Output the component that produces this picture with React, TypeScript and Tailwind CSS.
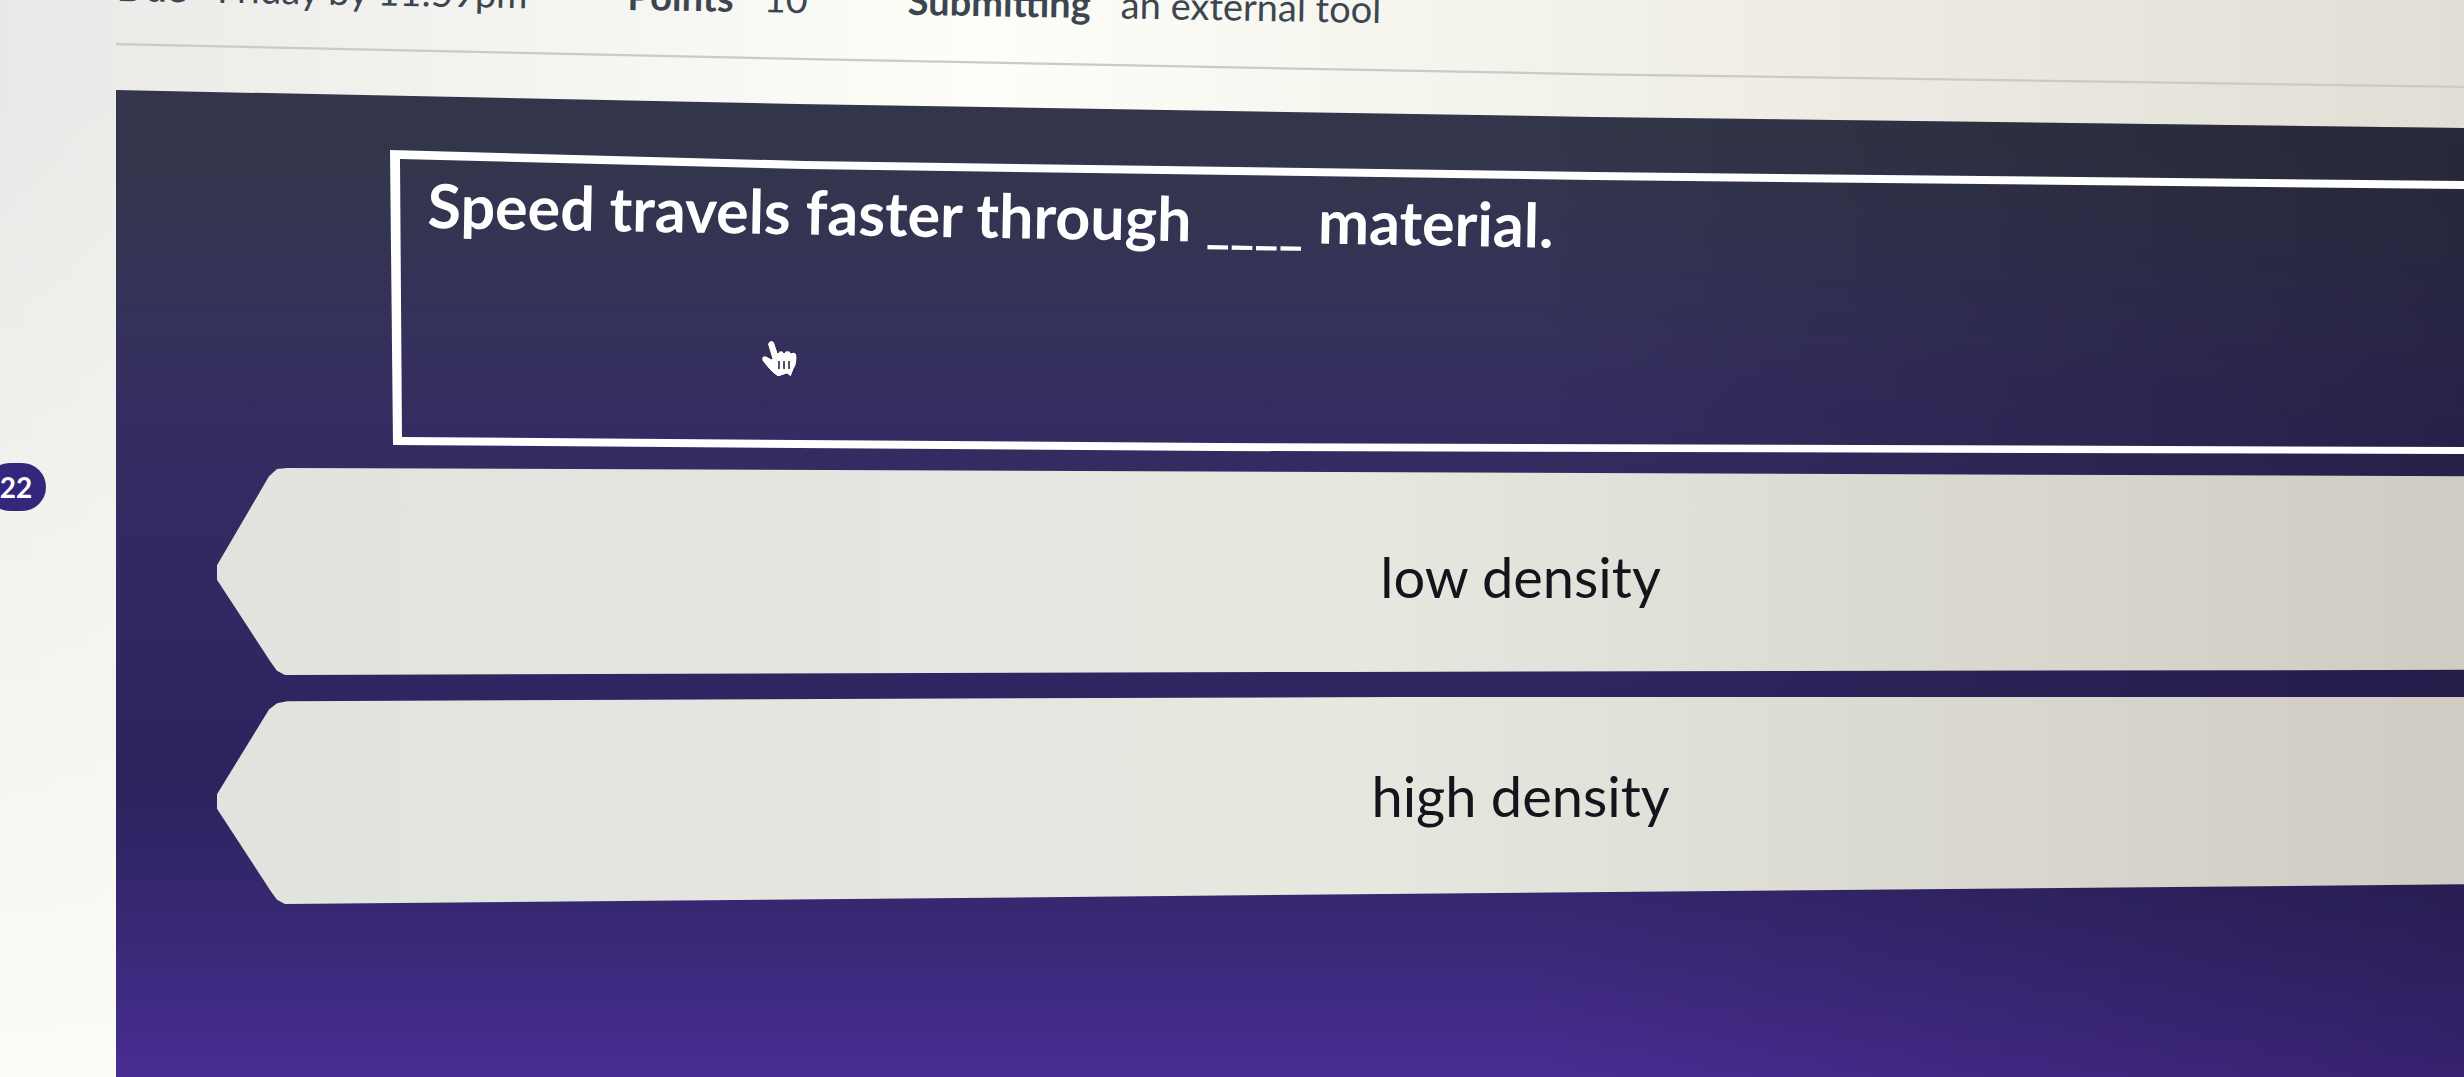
import React from 'react';

interface Detail {
  label: string;
  value: string;
}

interface Answer {
  label: string;
  shape: string;
}

const details: Detail[] = [
  { label: 'Due', value: 'Friday by 11:59pm' },
  { label: 'Points', value: '10' },
  { label: 'Submitting', value: 'an external tool' },
];

const answers: Answer[] = [
  {
    label: 'low density',
    shape: 'pt-[10px] [clip-path:polygon(0_47%,52px_4%,60px_1px,70px_0,100%_4%,100%_97.5%,50%_98.5%,68px_100%,60px_98%,54px_94%,0_54%)]',
  },
  {
    label: 'high density',
    shape: 'pb-[10px] [clip-path:polygon(0_47%,52px_6%,60px_3%,70px_2%,100%_-2%,100%_90.5%,68px_100%,60px_98%,54px_94%,0_54%)]',
  },
];

const PointerHand = () => (
  <svg viewBox="0 0 38 38" className="absolute left-[371px] top-[190px] size-[38px]" aria-hidden="true">
    <path
      d="M9 1c2-1 4 0 5 3l3 9c1-3 5-3 6 0 1-3 6-3 7 0 3-2 6 0 6 4 0 6-1 9-3 12l-3 8-4-3-9 3c-6-4-10-9-15-15-3-4 0-7 3-6l6 3L7 6C6 4 7 2 9 1z"
      fill="#fdfdfb"
      stroke="#26204e"
      strokeWidth="1"
    />
    <path d="M18 21v8M23 21v8M28 21v8" stroke="#565073" strokeWidth="2" />
  </svg>
);

const App = () => {
  return (
    <div className="relative flex min-h-screen flex-col overflow-hidden bg-linear-to-r from-[#e9eae7] via-[#fdfef8] via-40% to-[#e2ded6] font-['Lato',sans-serif]">
      {/* Assignment details */}
      <header className="ml-[116px] h-[90px]">
        <dl className="flex h-[43px] origin-bottom-left rotate-1 gap-[100px] whitespace-nowrap text-[38px] leading-[40px] text-[#3c4650]">
          {details.map((item) => (
            <div key={item.label} className="-mt-[34px] flex gap-[30px]">
              <dt className="font-bold">{item.label}</dt>
              <dd>{item.value}</dd>
            </div>
          ))}
        </dl>
        <div className="h-[45px] bg-[#c9cac9] [clip-path:polygon(0_0,30%_34%,63%_67%,100%_95%,100%_100%,63%_72%,30%_39%,0_5%)]" />
      </header>

      <div className="flex flex-1">
        <aside className="relative w-[116px] shrink-0 bg-linear-to-b from-transparent to-[#fbfbf7]">
          <span className="absolute -left-[14px] top-[373px] flex h-[48px] w-[60px] items-center justify-center rounded-full bg-[#35257c] text-[28px] font-bold text-white">
            22
          </span>
        </aside>

        {/* Question panel */}
        <main className="relative flex-1 bg-linear-to-b from-[#33364a] from-5% via-[#352f60] via-30% to-[#482d94] pl-[101px] [clip-path:polygon(0_0,29%_14px,63%_27px,100%_38px,100%_100%,0_100%)]">
          <div className="absolute inset-0 bg-linear-to-b from-transparent from-25% via-[#251d50]/70 via-70% to-transparent" />
          <div className="absolute inset-0 bg-linear-to-r from-transparent from-60% to-black/25" />

          <section className="relative mt-[60px] ml-[173px] h-[307px] pl-[37px] pt-[19px]">
            <div className="absolute inset-0 bg-white [clip-path:polygon(evenodd,0_0,20%_11px,58%_22px,100%_31px,100%_39px,58%_30px,20%_19px,10px_9px,12px_287px,40%_293px,100%_297px,100%_304px,40%_301px,3px_295px,0_0)]" />
            <h1 className="origin-bottom-left rotate-1 whitespace-nowrap text-[61px] font-bold leading-[72px] text-white">
              Speed travels faster through <span className="text-[52px]">____</span> material.
            </h1>
            <PointerHand />
          </section>

          <div className="relative mt-[11px] flex flex-col gap-[22px]">
            {answers.map((answer) => (
              <button
                key={answer.label}
                type="button"
                className={`h-[207px] w-full bg-linear-to-r from-[#e1e3de] via-[#e6e9e0] to-[#d0cbc3] pl-[360px] text-[56px] text-[#15131c] ${answer.shape}`}
              >
                {answer.label}
              </button>
            ))}
          </div>
        </main>
      </div>
    </div>
  );
};

export default App;
